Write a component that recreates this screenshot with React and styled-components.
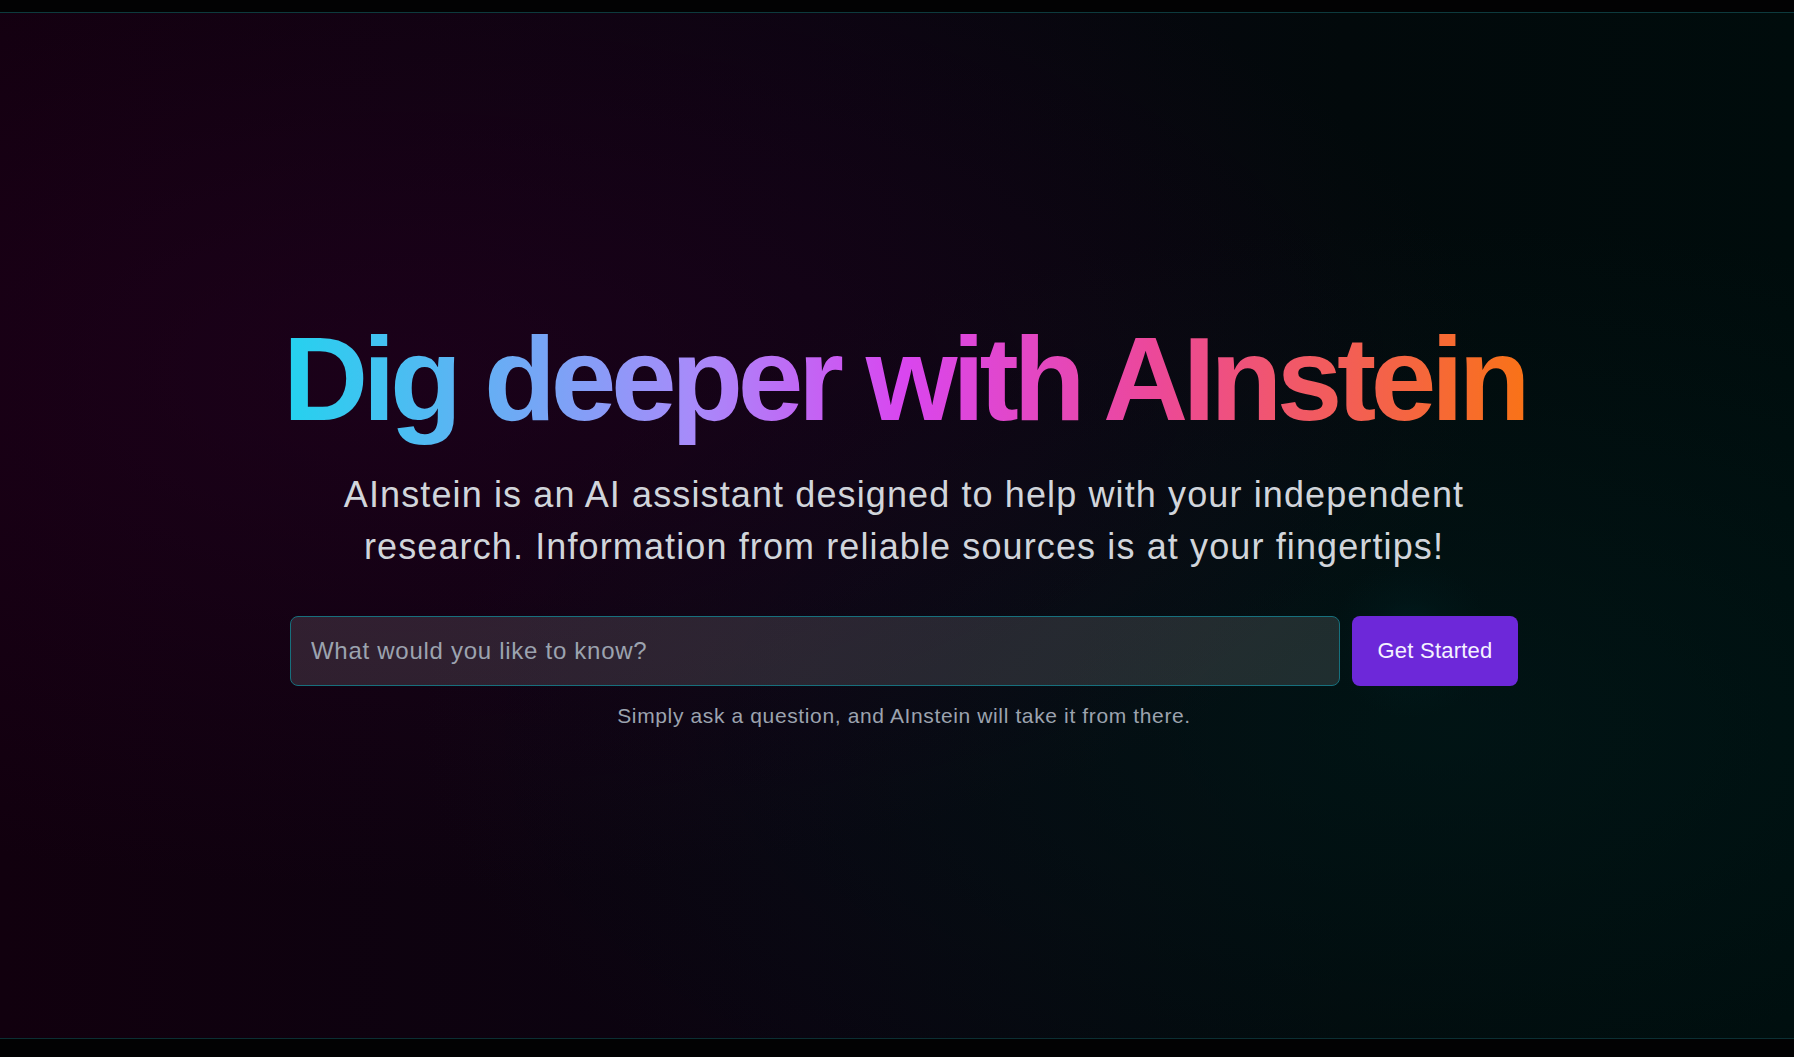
import React from 'react'
import styled, { createGlobalStyle } from 'styled-components'

const GlobalStyle = createGlobalStyle`
    html, body {
        margin: 0;
        padding: 0;
        background: #000;
        overflow: hidden;
    }
    * {
        box-sizing: border-box;
    }
`

const Page = styled.div`
    width: 100%;
    height: 1057px;
    padding-top: 12px;
    background: #020203;
    font-family: "Liberation Sans", Arial, sans-serif;
`

const Hero = styled.section`
    height: 1027px;
    padding: 0 0 2px 14px;
    border-top: 1px solid #0d3a3d;
    border-bottom: 1px solid #0b2f33;
    display: flex;
    flex-direction: column;
    align-items: center;
    justify-content: center;
    background:
        radial-gradient(circle at 78.6% 61%, rgba(0, 50, 55, 0.35) 0, rgba(0, 40, 45, 0.15) 40px, transparent 80px),
        radial-gradient(ellipse at 22% 35%, rgba(40, 0, 36, 0.5) 0, transparent 55%),
        radial-gradient(ellipse at 80% 70%, rgba(0, 30, 30, 0.5) 0, transparent 50%),
        linear-gradient(90deg, #11000e 0%, #0a0410 45%, #02090b 75%, #000c0c 100%);
`

const Headline = styled.h1`
    margin: 0;
    padding: 0 4px 16px;
    font-size: 118px;
    line-height: 1;
    font-weight: 700;
    letter-spacing: -0.046em;
    white-space: nowrap;
    background: linear-gradient(90deg, #22d3ee 0%, #a78bfa 33%, #d946ef 50%, #ec4899 70%, #f97316 100%);
    -webkit-background-clip: text;
    background-clip: text;
    color: transparent;
`

const Lead = styled.p`
    margin: 15px 0 0;
    max-width: 1200px;
    text-align: center;
    font-size: 36px;
    line-height: 52px;
    letter-spacing: 0.031em;
    color: #d1d5db;
`

const AskForm = styled.form`
    margin-top: 43px;
    display: flex;
    gap: 12px;
    width: 1228px;
`

const AskInput = styled.input`
    flex: 1;
    height: 70px;
    padding: 0 20px;
    border: 1px solid #17707d;
    border-radius: 8px;
    background: rgba(255, 255, 255, 0.12);
    color: #e5e7eb;
    font-family: inherit;
    font-size: 24px;
    letter-spacing: 0.03em;
    outline: none;
    &::placeholder {
        color: #9ca3af;
    }
`

const StartButton = styled.button`
    width: 166px;
    height: 70px;
    border: none;
    border-radius: 8px;
    background: #6d28d9;
    color: #f5f3ff;
    font-family: inherit;
    font-size: 22px;
    letter-spacing: 0.01em;
    cursor: pointer;
`

const Hint = styled.p`
    margin: 16px 0 0;
    font-size: 21px;
    line-height: 28px;
    letter-spacing: 0.03em;
    color: #9ca3af;
`

export default function App() {
    return (
        <Page>
            <GlobalStyle />
            <Hero>
                <Headline>Dig deeper with AInstein</Headline>
                <Lead>
                    AInstein is an AI assistant designed to help with your independent research. Information from reliable sources is at your fingertips!
                </Lead>
                <AskForm onSubmit={e => e.preventDefault()}>
                    <AskInput placeholder="What would you like to know?" />
                    <StartButton type="submit">Get Started</StartButton>
                </AskForm>
                <Hint>Simply ask a question, and AInstein will take it from there.</Hint>
            </Hero>
        </Page>
    )
}
